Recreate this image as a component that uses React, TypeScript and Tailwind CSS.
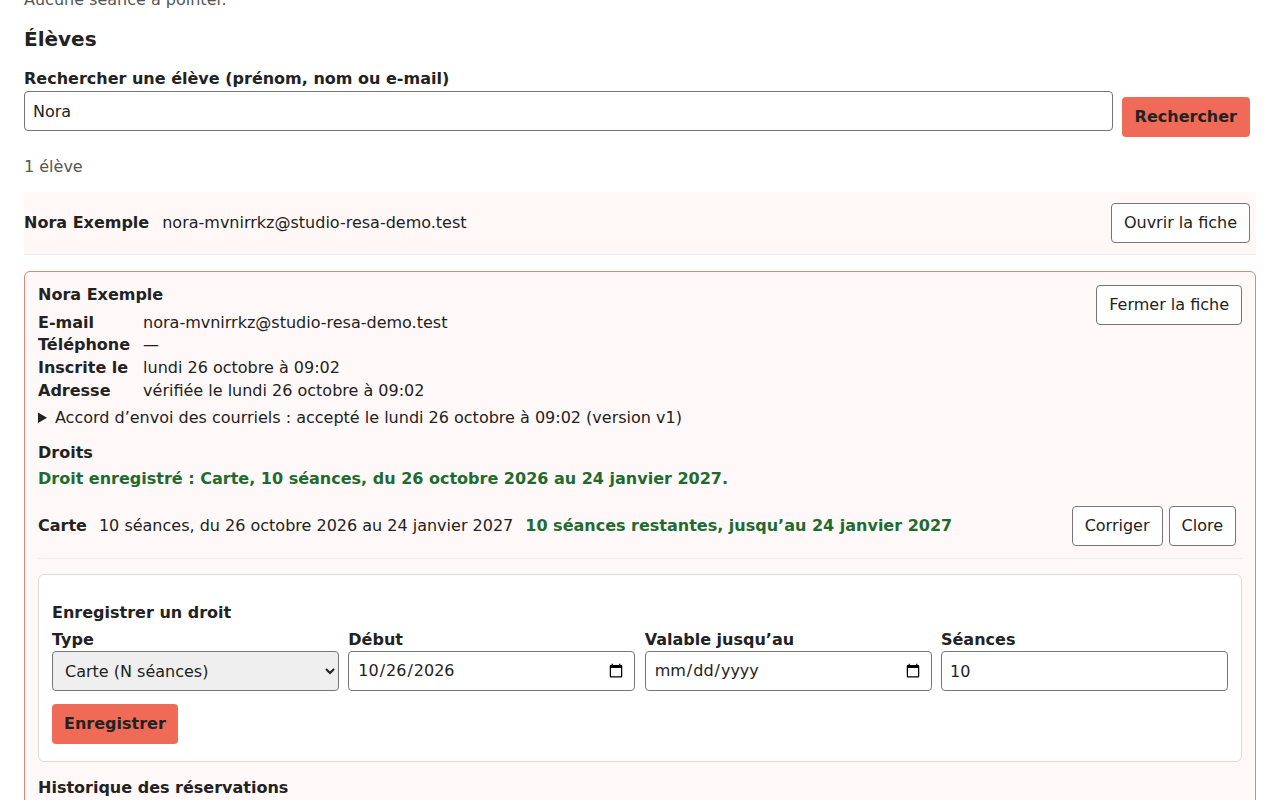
import { useState } from "react";

const details = [
  { label: "E-mail", value: "nora-mvnirrkz@studio-resa-demo.test" },
  { label: "Téléphone", value: "—" },
  { label: "Inscrite le", value: "lundi 26 octobre à 09:02" },
  { label: "Adresse", value: "vérifiée le lundi 26 octobre à 09:02" },
];

const fieldBox =
  "h-10 w-full rounded-[4px] border border-[#767676] bg-white px-[8px] text-[16px] text-[#222]";

const App = () => {
  const [query, setQuery] = useState("Nora");
  const [open, setOpen] = useState(true);
  const [sessions, setSessions] = useState("10");

  return (
    <div className="min-h-screen bg-white font-['DejaVu_Sans',sans-serif] text-[16px] text-[#222]">
      <div className="px-6">
        <p className="-mt-[12px] leading-6 text-[#555]">Aucune séance à pointer.</p>

        <h2 className="mt-[13px] text-[20px] font-bold leading-[28px]">Élèves</h2>

        <form
          className="flex items-end gap-[9px]"
          onSubmit={(e) => e.preventDefault()}
        >
          <label className="flex flex-1 flex-col">
            <span className="mt-[14px] font-bold leading-6">
              Rechercher une élève (prénom, nom ou e-mail)
            </span>
            <input
              value={query}
              onChange={(e) => setQuery(e.target.value)}
              className={`${fieldBox} mb-[6px]`}
            />
          </label>
          <button className="mr-[6px] h-10 rounded-[4px] bg-[#ef6b57] px-[13px] font-bold text-[#222]">
            Rechercher
          </button>
        </form>

        <p className="mt-[18px] leading-6 text-[#555]">1 élève</p>

        <div className="mt-[13px] flex items-center gap-[13px] border-b border-[#eee] bg-[#fff8f7] py-[11px] pr-[6px]">
          <span className="font-bold">Nora Exemple</span>
          <span>nora-mvnirrkz@studio-resa-demo.test</span>
          <button
            onClick={() => setOpen(true)}
            className="ml-auto h-10 rounded-[4px] border border-[#767676] bg-white px-[12px]"
          >
            Ouvrir la fiche
          </button>
        </div>

        {open && (
          <section className="mt-[16px] rounded-[6px] border border-[#e9826f] bg-[#fff8f8] px-[13px] pt-[13px] pb-6">
            <div className="flex items-start justify-between">
              <div>
                <h3 className="mt-[1px] font-bold leading-[18.6px]">Nora Exemple</h3>
                <dl className="mt-[7px] grid grid-cols-[auto_1fr] gap-x-[13px] leading-[22.8px]">
                  {details.map((d) => (
                    <div key={d.label} className="contents">
                      <dt className="font-bold">{d.label}</dt>
                      <dd>{d.value}</dd>
                    </div>
                  ))}
                </dl>
              </div>
              <button
                onClick={() => setOpen(false)}
                className="h-10 rounded-[4px] border border-[#767676] bg-white px-[12px]"
              >
                Fermer la fiche
              </button>
            </div>

            <details className="mt-[4.5px] leading-[22.6px]">
              <summary className="cursor-pointer">
                Accord d’envoi des courriels : accepté le lundi 26 octobre à 09:02 (version v1)
              </summary>
              <p className="pl-4 text-[#555]">Consentement enregistré.</p>
            </details>

            <h4 className="mt-[12px] font-bold leading-[22.6px]">Droits</h4>
            <p className="mt-[4px] font-bold leading-[22.6px] text-[#1e6b30]">
              Droit enregistré : Carte, 10 séances, du 26 octobre 2026 au 24 janvier 2027.
            </p>

            <div className="mt-[15px] flex items-center gap-3 border-b border-[#eee] pb-[12px] pr-[6px]">
              <span className="font-bold">Carte</span>
              <span>10 séances, du 26 octobre 2026 au 24 janvier 2027</span>
              <span className="font-bold text-[#1e6b30]">
                10 séances restantes, jusqu’au 24 janvier 2027
              </span>
              <div className="ml-auto flex gap-[6px]">
                <button className="h-10 rounded-[4px] border border-[#767676] bg-white px-[12px]">
                  Corriger
                </button>
                <button className="h-10 rounded-[4px] border border-[#767676] bg-white px-[12px]">
                  Clore
                </button>
              </div>
            </div>

            <form
              onSubmit={(e) => e.preventDefault()}
              className="mt-[15px] rounded-[6px] border border-[#ddd] bg-white px-[13px] pt-[27px] pb-[17px]"
            >
              <h4 className="font-bold leading-[22.6px]">Enregistrer un droit</h4>
              <div className="mt-[4px] grid grid-cols-4 gap-x-[9.33px]">
                <label className="flex flex-col">
                  <span className="font-bold leading-[22.6px]">Type</span>
                  <select className="h-10 w-full rounded-[4px] border border-[#767676] bg-[#efefef] px-[8px] text-[16px] text-[#222]">
                    <option>Carte (N séances)</option>
                    <option>Abonnement</option>
                  </select>
                </label>
                <label className="flex flex-col">
                  <span className="font-bold leading-[22.6px]">Début</span>
                  <input type="date" defaultValue="2026-10-26" className={fieldBox} />
                </label>
                <label className="flex flex-col">
                  <span className="font-bold leading-[22.6px]">Valable jusqu’au</span>
                  <input type="date" className={fieldBox} />
                </label>
                <label className="flex flex-col">
                  <span className="font-bold leading-[22.6px]">Séances</span>
                  <input
                    value={sessions}
                    onChange={(e) => setSessions(e.target.value)}
                    className={fieldBox}
                  />
                </label>
              </div>
              <button className="mt-[13px] h-10 rounded-[4px] bg-[#ef6b57] px-[12px] font-bold text-[#222]">
                Enregistrer
              </button>
            </form>

            <h4 className="mt-[15px] font-bold leading-[22.6px]">Historique des réservations</h4>
            <p className="mt-2 leading-6 text-[#555]">Aucune réservation.</p>
          </section>
        )}
      </div>
    </div>
  );
};

export default App;
